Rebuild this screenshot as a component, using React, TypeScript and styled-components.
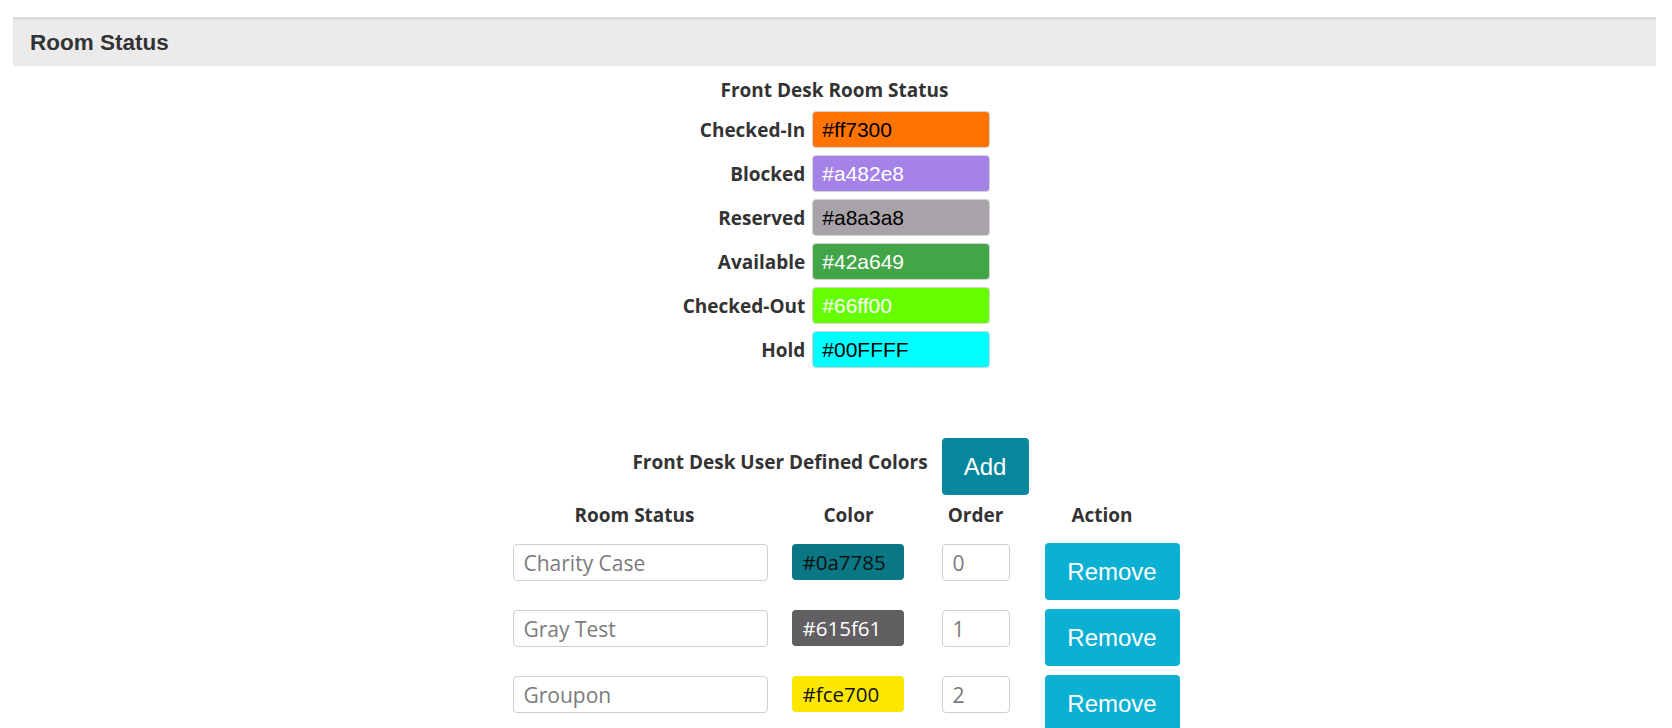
import styled, { createGlobalStyle } from 'styled-components';

const GlobalStyle = createGlobalStyle`
  body {
    margin: 0;
    padding: 17px 16px 0 13px;
    background: #fff;
    font-family: "Open Sans", "Liberation Sans", Arial, sans-serif;
    color: #333;
  }
`;

const Panel = styled.div`
  display: flex;
  flex-direction: column;
`;

const PanelHeader = styled.div`
  height: 46px;
  border-top: 3px solid #dcdcdc;
  background: #ebebeb;
  display: flex;
  align-items: center;
  padding-left: 17px;
`;

const PanelTitle = styled.h2`
  margin: 0;
  font-family: "Liberation Sans", Arial, sans-serif;
  font-size: 22.5px;
  font-weight: 700;
  color: #333;
`;

const Section = styled.div<{ $top: number }>`
  display: flex;
  flex-direction: column;
  align-items: center;
  margin-top: ${({ $top }) => $top}px;
`;

const SectionTitle = styled.div`
  font-size: 19px;
  font-weight: 700;
  line-height: 26px;
  color: #333;
`;

const StatusGrid = styled.div`
  display: grid;
  grid-template-columns: auto 178px;
  column-gap: 7px;
  row-gap: 7px;
  margin: 8px 0 0 4px;
`;

const StatusLabel = styled.div`
  font-size: 19px;
  font-weight: 700;
  text-align: right;
  align-self: center;
  color: #333;
`;

const StatusColor = styled.div<{ $bg: string; $fg: string }>`
  height: 37px;
  box-sizing: border-box;
  border: 1px solid #d4d4d4;
  border-radius: 4px;
  background: ${({ $bg }) => $bg};
  color: ${({ $fg }) => $fg};
  font-family: "Liberation Sans", Arial, sans-serif;
  font-size: 21px;
  display: flex;
  align-items: center;
  padding-left: 9px;
`;

const AddLine = styled.div`
  display: flex;
  align-items: center;
  gap: 14px;
  margin-right: 8px;
`;

const AddLabel = styled.div`
  font-size: 19px;
  font-weight: 700;
  color: #333;
  padding-bottom: 10px;
`;

const Button = styled.button<{ $bg: string; $w: number }>`
  width: ${({ $w }) => $w}px;
  height: 57px;
  border: none;
  border-radius: 4px;
  background: ${({ $bg }) => $bg};
  color: #fff;
  font-family: "Liberation Sans", Arial, sans-serif;
  font-size: 24px;
  padding: 0;
  cursor: pointer;
`;

const Table = styled.div`
  display: flex;
  flex-direction: column;
  margin-top: 8px;
  margin-left: calc(50% - 322px);
`;

const HeadRow = styled.div`
  display: flex;
  margin-bottom: 16px;
`;

const HeadCell = styled.div<{ $w: number; $ml?: number }>`
  width: ${({ $w }) => $w}px;
  margin-left: ${({ $ml = 0 }) => $ml}px;
  text-align: center;
  font-size: 19px;
  font-weight: 700;
  line-height: 24px;
  color: #333;
  white-space: nowrap;
`;

const Row = styled.div`
  display: flex;
  align-items: flex-start;
  margin-bottom: 9px;
`;

const TextField = styled.input<{ $w: number; $ml?: number }>`
  width: ${({ $w }) => $w}px;
  margin: 1px 0 0 ${({ $ml = 0 }) => $ml}px;
  height: 37px;
  box-sizing: border-box;
  border: 1px solid #cfcfcf;
  border-radius: 4px;
  padding: 0 10px;
  font-family: "Open Sans", sans-serif;
  font-size: 21px;
  color: #7b7b7b;
  background: #fff;
  outline: none;
`;

const Swatch = styled.div<{ $bg: string; $fg: string }>`
  width: 112px;
  height: 36px;
  margin: 1px 0 0 24px;
  box-sizing: border-box;
  border-radius: 4px;
  background: ${({ $bg }) => $bg};
  color: ${({ $fg }) => $fg};
  font-size: 20.5px;
  display: flex;
  align-items: center;
  padding-left: 11px;
`;

const RemoveButton = styled(Button)`
  margin-left: 35px;
`;

const statuses = [
  { label: 'Checked-In', bg: '#ff7300', fg: '#000' },
  { label: 'Blocked', bg: '#a482e8', fg: '#fff' },
  { label: 'Reserved', bg: '#a8a3a8', fg: '#000' },
  { label: 'Available', bg: '#42a649', fg: '#fff' },
  { label: 'Checked-Out', bg: '#66ff00', fg: '#fff' },
  { label: 'Hold', bg: '#00FFFF', fg: '#000' },
];

const userColors = [
  { name: 'Charity Case', color: '#0a7785', fg: '#111', order: 0 },
  { name: 'Gray Test', color: '#615f61', fg: '#fff', order: 1 },
  { name: 'Groupon', color: '#fce700', fg: '#111', order: 2 },
];

export default function App() {
  return (
    <>
      <GlobalStyle />
      <Panel>
        <PanelHeader>
          <PanelTitle>Room Status</PanelTitle>
        </PanelHeader>

        <Section $top={11}>
          <SectionTitle>Front Desk Room Status</SectionTitle>
          <StatusGrid>
            {statuses.map((s) => [
              <StatusLabel key={s.label + '-l'}>{s.label}</StatusLabel>,
              <StatusColor key={s.label + '-c'} $bg={s.bg} $fg={s.fg}>
                {s.bg}
              </StatusColor>,
            ])}
          </StatusGrid>
        </Section>

        <Section $top={70}>
          <AddLine>
            <AddLabel>Front Desk User Defined Colors</AddLabel>
            <Button $bg="#07879e" $w={87}>Add</Button>
          </AddLine>
        </Section>

        <Table>
          <HeadRow>
            <HeadCell $w={244}>Room Status</HeadCell>
            <HeadCell $w={112} $ml={36}>Color</HeadCell>
            <HeadCell $w={70} $ml={36}>Order</HeadCell>
            <HeadCell $w={135} $ml={24}>Action</HeadCell>
          </HeadRow>
          {userColors.map((c) => (
            <Row key={c.name}>
              <TextField $w={255} defaultValue={c.name} />
              <Swatch $bg={c.color} $fg={c.fg}>{c.color}</Swatch>
              <TextField $w={68} $ml={38} defaultValue={String(c.order)} />
              <RemoveButton $bg="#0bb0d3" $w={135}>Remove</RemoveButton>
            </Row>
          ))}
        </Table>
      </Panel>
    </>
  );
}
